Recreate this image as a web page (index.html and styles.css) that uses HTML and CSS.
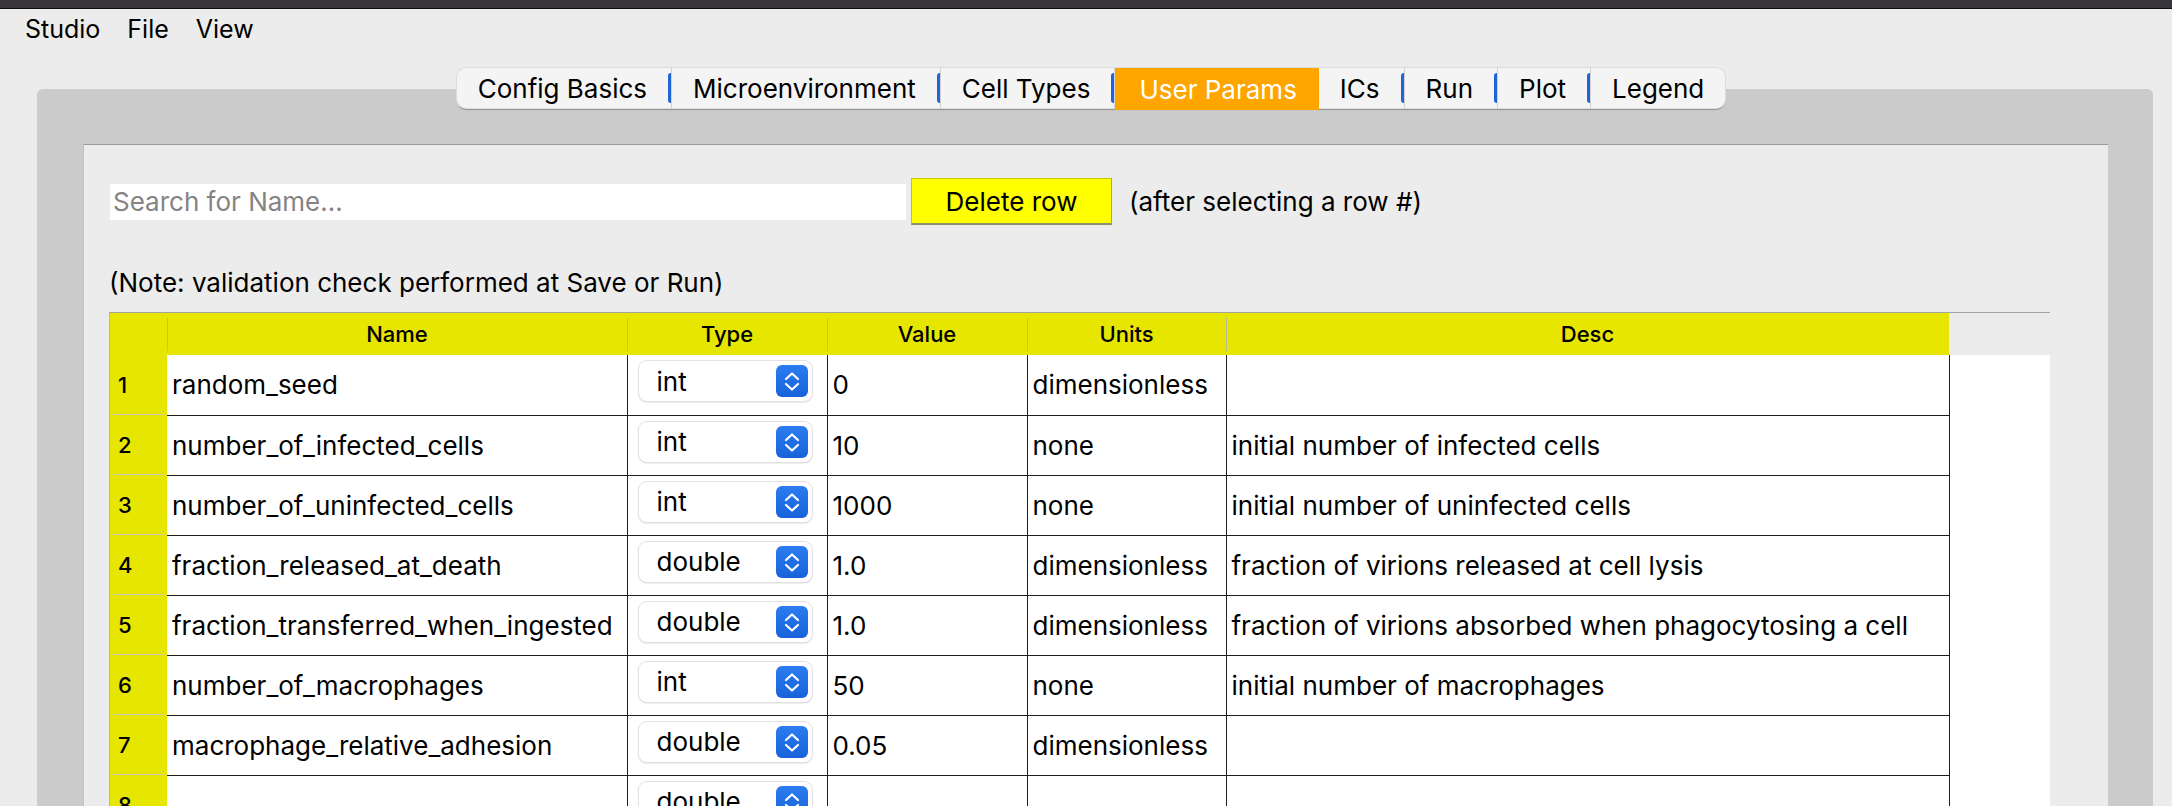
FILE: index.html
```html
<!DOCTYPE html>
<html>
<head>
<meta charset="utf-8">
<link rel="stylesheet" href="styles.css">
</head>
<body>
<div class="titlebar"></div>
<nav class="menubar"><span>Studio</span><span>File</span><span>View</span></nav>
<div class="tabwidget">
  <div class="tabbar">
    <div class="tabs">
      <div class="tab">Config Basics</div>
      <span class="sep"></span>
      <div class="tab">Microenvironment</div>
      <span class="sep"></span>
      <div class="tab">Cell Types</div>
      <span class="sep"></span>
      <div class="tab active">User Params</div>
      <div class="tab">ICs</div>
      <span class="sep"></span>
      <div class="tab">Run</div>
      <span class="sep"></span>
      <div class="tab">Plot</div>
      <span class="sep"></span>
      <div class="tab">Legend</div>
    </div>
  </div>
  <div class="pane">
    <div class="page">
      <div class="toolbar">
        <input class="search" type="text" placeholder="Search for Name...">
        <button class="delete">Delete row</button>
        <span class="hint">(after selecting a row #)</span>
      </div>
      <p class="note">(Note: validation check performed at Save or Run)</p>
      <div class="tableview">
        <table>
          <colgroup>
            <col class="c-num"><col class="c-name"><col class="c-type"><col class="c-value"><col class="c-units"><col class="c-desc"><col class="c-fill">
          </colgroup>
          <thead>
            <tr>
              <th class="corner"></th><th>Name</th><th>Type</th><th>Value</th><th>Units</th><th>Desc</th><th class="fill"></th>
            </tr>
          </thead>
          <tbody>
            <tr><td class="num">1</td><td>random_seed</td><td class="type"><div class="combo"><span>int</span><span class="stepper"><svg viewBox="0 0 32 32" width="32" height="32"><polyline points="10,14 16,8.5 22,14"/><polyline points="10,19 16,24.5 22,19"/></svg></span></div></td><td>0</td><td>dimensionless</td><td></td><td class="fill"></td></tr>
            <tr><td class="num">2</td><td>number_of_infected_cells</td><td class="type"><div class="combo"><span>int</span><span class="stepper"><svg viewBox="0 0 32 32" width="32" height="32"><polyline points="10,14 16,8.5 22,14"/><polyline points="10,19 16,24.5 22,19"/></svg></span></div></td><td>10</td><td>none</td><td>initial number of infected cells</td><td class="fill"></td></tr>
            <tr><td class="num">3</td><td>number_of_uninfected_cells</td><td class="type"><div class="combo"><span>int</span><span class="stepper"><svg viewBox="0 0 32 32" width="32" height="32"><polyline points="10,14 16,8.5 22,14"/><polyline points="10,19 16,24.5 22,19"/></svg></span></div></td><td>1000</td><td>none</td><td>initial number of uninfected cells</td><td class="fill"></td></tr>
            <tr><td class="num">4</td><td>fraction_released_at_death</td><td class="type"><div class="combo"><span>double</span><span class="stepper"><svg viewBox="0 0 32 32" width="32" height="32"><polyline points="10,14 16,8.5 22,14"/><polyline points="10,19 16,24.5 22,19"/></svg></span></div></td><td>1.0</td><td>dimensionless</td><td>fraction of virions released at cell lysis</td><td class="fill"></td></tr>
            <tr><td class="num">5</td><td>fraction_transferred_when_ingested</td><td class="type"><div class="combo"><span>double</span><span class="stepper"><svg viewBox="0 0 32 32" width="32" height="32"><polyline points="10,14 16,8.5 22,14"/><polyline points="10,19 16,24.5 22,19"/></svg></span></div></td><td>1.0</td><td>dimensionless</td><td>fraction of virions absorbed when phagocytosing a cell</td><td class="fill"></td></tr>
            <tr><td class="num">6</td><td>number_of_macrophages</td><td class="type"><div class="combo"><span>int</span><span class="stepper"><svg viewBox="0 0 32 32" width="32" height="32"><polyline points="10,14 16,8.5 22,14"/><polyline points="10,19 16,24.5 22,19"/></svg></span></div></td><td>50</td><td>none</td><td>initial number of macrophages</td><td class="fill"></td></tr>
            <tr><td class="num">7</td><td>macrophage_relative_adhesion</td><td class="type"><div class="combo"><span>double</span><span class="stepper"><svg viewBox="0 0 32 32" width="32" height="32"><polyline points="10,14 16,8.5 22,14"/><polyline points="10,19 16,24.5 22,19"/></svg></span></div></td><td>0.05</td><td>dimensionless</td><td></td><td class="fill"></td></tr>
            <tr><td class="num">8</td><td></td><td class="type"><div class="combo"><span>double</span><span class="stepper"><svg viewBox="0 0 32 32" width="32" height="32"><polyline points="10,14 16,8.5 22,14"/><polyline points="10,19 16,24.5 22,19"/></svg></span></div></td><td></td><td></td><td></td><td class="fill"></td></tr>
          </tbody>
        </table>
      </div>
    </div>
  </div>
</div>
</body>
</html>
```
FILE: styles.css
```css
* { box-sizing: border-box; }
html, body { margin: 0; padding: 0; }
body {
  background: #ececec;
  font-family: "Inter", "Liberation Sans", sans-serif;
  color: #000;
  overflow: hidden;
  height: 806px;
}
.titlebar {
  height: 9px;
  background: #38353b;
  border-bottom: 1px solid #0e0e0e;
}
.menubar {
  display: flex;
  align-items: center;
  gap: 27px;
  height: 40px;
  padding-left: 25px;
  font-size: 25px;
}
.tabwidget {
  margin: 19px 19px 0 37px;
}
.tabbar {
  position: relative;
  z-index: 1;
  display: flex;
  justify-content: center;
  padding-right: 8px;
  height: 40px;
}
.tabs {
  display: flex;
  align-items: stretch;
  height: 40px;
  background: #f4f4f4;
  border-radius: 9px;
  box-shadow: 0 0 0 1px #dcdcdc, 0 1.5px 1px rgba(0,0,0,0.28);
}
.tab {
  display: flex;
  align-items: center;
  padding: 0 21px;
  font-size: 26px;
  white-space: nowrap;
}
.tab.active {
  background: #ffa500;
  color: #fff;
  height: 42px;
  padding: 0 22px 0 24px;
}
.sep {
  display: flex;
  align-items: center;
  width: 4px;
  border-right: 1px solid #d2d2d2;
}
.sep::before {
  content: "";
  display: block;
  width: 3px;
  height: 30px;
  background: #1f64d8;
  border-radius: 3px 0 0 3px;
}
.pane {
  margin-top: -19px;
  background: #cbcbcb;
  border-radius: 6px 6px 0 0;
  padding: 55px 45px 0 46px;
  height: 760px;
}
.page {
  background: #ececec;
  border-top: 1px solid #9c9c9c;
  border-left: 1px solid #c3c3c3;
  padding: 33px 57px 0 25px;
  height: 700px;
}
.toolbar {
  display: flex;
  align-items: center;
  height: 47px;
}
.search {
  margin: 0 0 0 1px;
  width: 796px;
  height: 36px;
  border: none;
  outline: none;
  background: #fff;
  padding: 0 3px;
  font-family: inherit;
  font-size: 26px;
  color: #000;
}
.search::placeholder { color: #848484; }
.delete {
  margin-left: 5px;
  width: 201px;
  height: 47px;
  background: #ffff00;
  border: 1px solid #c6c600;
  border-bottom: 2px solid #8e8e6e;
  border-right-color: #a8a850;
  font-family: inherit;
  font-size: 26px;
  color: #000;
  padding: 0;
}
.hint {
  margin-left: 17px;
  font-size: 26px;
}
.note {
  margin: 43px 0 0 0;
  font-size: 26px;
  line-height: 30px;
}
.tableview {
  margin-top: 14px;
  width: 1941px;
  height: 520px;
  background: #fff;
  border-top: 1px solid #a4a4a4;
  border-left: 1px solid #b5b5b5;
}
table {
  border-collapse: collapse;
  table-layout: fixed;
  width: 1940px;
}
.c-num { width: 57px; }
.c-name { width: 460px; }
.c-type { width: 200px; }
.c-value { width: 200px; }
.c-units { width: 199px; }
.c-desc { width: 723px; }
.c-fill { width: 101px; }
th {
  position: relative;
  height: 42px;
  padding: 0;
  background: #e6e600;
  font-weight: 500;
  font-size: 22px;
  text-align: center;
}
th::before {
  content: "";
  position: absolute;
  left: 0;
  top: 5px;
  bottom: 4px;
  width: 1px;
  background: #b8b8a0;
}
th.corner::before, th.fill::before { display: none; }
th.fill { background: #ebebeb; }
td {
  height: 60px;
  padding: 0 5px;
  font-size: 26px;
  white-space: nowrap;
  overflow: hidden;
  border-right: 1px solid #1e1e1e;
  border-bottom: 1px solid #1e1e1e;
  vertical-align: middle;
}
td.num {
  position: relative;
  background: #e6e600;
  border: none;
  font-size: 22px;
  font-weight: 500;
  padding-left: 8px;
  overflow: visible;
}
td.num::after {
  content: "";
  position: absolute;
  left: 4px;
  right: 4px;
  bottom: -1px;
  height: 2px;
  background: #c6c6c6;
}
td.fill {
  border: none;
  background: #fff;
}
td.type {
  vertical-align: top;
  padding: 6px 0 0 11px;
}
.combo {
  display: flex;
  align-items: center;
  justify-content: space-between;
  width: 173px;
  height: 40px;
  padding: 0 4px 0 18px;
  background: #fff;
  border-radius: 8px;
  box-shadow: 0 0 0 1px #e2e2e2, 0 1px 2px rgba(0,0,0,0.25);
}
.stepper {
  display: flex;
  width: 32px;
  height: 32px;
  border-radius: 6px;
  background: linear-gradient(#2c7cf0, #1762da);
}
.stepper polyline {
  fill: none;
  stroke: #fff;
  stroke-width: 2.2;
  stroke-linecap: round;
  stroke-linejoin: round;
}
```
